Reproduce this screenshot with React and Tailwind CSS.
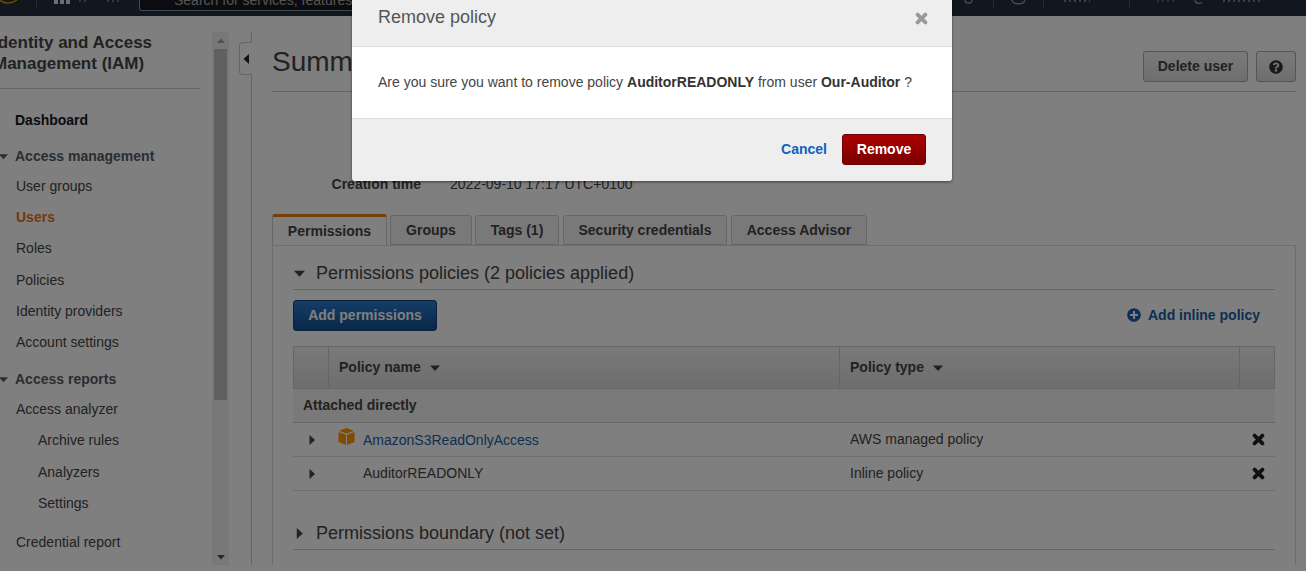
import React from 'react';
import { FaQuestionCircle, FaPlusCircle } from 'react-icons/fa';

const Caret = ({ dir = 'down', className = '' }) => (
  <svg viewBox="0 0 10 10" className={className} fill="currentColor">
    {dir === 'down' && <path d="M0 2.5h10L5 8z" />}
    {dir === 'right' && <path d="M2.5 0v10L8 5z" />}
    {dir === 'left' && <path d="M8 0v10L2.5 5z" />}
  </svg>
);

const CloseIcon = ({ className = '' }) => (
  <svg viewBox="0 0 12 12" className={className} fill="none" stroke="currentColor" strokeWidth="3.5" strokeLinecap="round">
    <path d="M2.4 2.4l7.2 7.2M9.6 2.4l-7.2 7.2" />
  </svg>
);

const CubeIcon = () => (
  <svg viewBox="0 0 17 17" className="w-[17px] h-[17px] text-[#ff9900]" fill="currentColor">
    <path d="M8.5 0L16 2.8 8.5 5.6 1 2.8z" />
    <path d="M0.5 4L8 6.8V17L0.5 14z" />
    <path d="M9 6.8L16.5 4v10L9 17z" />
  </svg>
);

const Sidebar = () => (
  <aside className="w-[229px] shrink-0 flex h-full">
    <div className="w-[212px] shrink-0 overflow-hidden">
      <div className="-ml-[7px] pt-[16px] text-[17px] leading-[21px] font-bold text-[#444]">
        <div className="whitespace-nowrap">Identity and Access</div>
        <div className="whitespace-nowrap">Management (IAM)</div>
      </div>
      <div className="mt-[14px] h-px w-[200px] bg-[#ccc]" />
      <div className="text-[14px] leading-[20px] text-[#444]">
        <div className="mt-[21px] pl-[15px] font-bold text-[#16191f]">Dashboard</div>
        <div className="mt-[16px] flex items-center font-bold text-[#545b64]">
          <Caret className="w-[9px] h-[9px] -ml-[1px] mr-[7px]" />
          Access management
        </div>
        <div className="mt-[10px] pl-[16px]">User groups</div>
        <div className="mt-[11px] pl-[16px] font-bold text-[#ec7211]">Users</div>
        <div className="mt-[11px] pl-[16px]">Roles</div>
        <div className="mt-[12px] pl-[16px]">Policies</div>
        <div className="mt-[11px] pl-[16px]">Identity providers</div>
        <div className="mt-[11px] pl-[16px]">Account settings</div>
        <div className="mt-[17px] flex items-center font-bold text-[#545b64]">
          <Caret className="w-[9px] h-[9px] -ml-[1px] mr-[7px]" />
          Access reports
        </div>
        <div className="mt-[10px] pl-[16px]">Access analyzer</div>
        <div className="mt-[11px] pl-[38px]">Archive rules</div>
        <div className="mt-[12px] pl-[38px]">Analyzers</div>
        <div className="mt-[11px] pl-[38px]">Settings</div>
        <div className="mt-[19px] pl-[16px]">Credential report</div>
      </div>
    </div>
    <div className="w-[17px] mt-[16px] mb-[6px] bg-[#f1f1f1] flex flex-col items-center">
      <div className="h-[17px] flex items-center text-[#a3a3a3]">
        <Caret dir="down" className="w-[8px] h-[8px] rotate-180" />
      </div>
      <div className="w-[13px] h-[351px] bg-[#c1c1c1]" />
      <div className="flex-1" />
      <div className="h-[17px] flex items-center text-[#505050]">
        <Caret dir="down" className="w-[8px] h-[8px]" />
      </div>
    </div>
  </aside>
);

const tabs = [
  { label: 'Groups', cls: 'ml-[3px] w-[82px]' },
  { label: 'Tags (1)', cls: 'ml-[3px] w-[84px]' },
  { label: 'Security credentials', cls: 'ml-[4px] w-[164px]' },
  { label: 'Access Advisor', cls: 'ml-[4px] w-[136px]' },
];

const PolicyRow = ({ name, type, link }) => (
  <div className="flex h-[34px] border-b border-[#ddd] items-center">
    <div className="w-[35px] flex justify-center pl-[2px] text-[#444]">
      <Caret dir="right" className="w-[10px] h-[10px]" />
    </div>
    {/* icon column */}
    <div className="w-[35px] flex justify-center pl-[1px] -mt-[6px]">
      {link && <CubeIcon />}
    </div>
    <div className={`w-[477px] ${link ? 'text-[#1a5ea8] pt-[2px]' : 'text-[#444]'}`}>{name}</div>
    <div className="flex-1 pl-[10px] text-[#444]">{type}</div>
    <CloseIcon className="w-[13px] h-[13px] mr-[10px] text-[#222]" />
  </div>
);

const Main = () => (
  <main className="flex-1 min-w-0 flex h-full">
    <div className="w-[12px] shrink-0 mt-[16px] mb-[6px] ml-[11px] relative border-r border-[#ccc]">
      <div className="absolute -left-[1px] top-[10px] w-[13px] h-[33px] bg-white border border-r-0 border-[#ccc] rounded-l-[4px] flex items-center justify-center text-[#222]">
        <Caret dir="left" className="w-[10px] h-[10px]" />
      </div>
    </div>
    <div className="flex-1 min-w-0 pl-[20px] pr-[10px]">
      <div className="h-[76px] pt-[35px] border-b border-[#ccc] flex justify-between items-start">
        <h1 className="text-[28px] leading-[34px] -mt-[6px] text-[#444]">Summary</h1>
        <div className="flex gap-[8px]">
          <button className="h-[31px] w-[105px] border border-[#aaa] rounded-[3px] bg-gradient-to-b from-[#f4f4f4] to-[#dedede] text-[14px] font-bold text-[#444]">Delete user</button>
          <button className="h-[31px] w-[40px] border border-[#aaa] rounded-[3px] bg-gradient-to-b from-[#f4f4f4] to-[#dedede] flex items-center justify-center text-[#333]">
            <FaQuestionCircle className="w-[14px] h-[14px]" />
          </button>
        </div>
      </div>
      <div className="h-[123px]">
        <div className="flex pt-[82px] text-[14px] leading-[20px] text-[#444]">
          <div className="w-[149px] text-right font-bold">Creation time</div>
          <div className="pl-[29px]">2022-09-10 17:17 UTC+0100</div>
        </div>
      </div>
      <div className="flex h-[31px] text-[14px] font-bold text-[#444] -mt-[1px] relative">
        <div className="w-[115px] h-[31px] bg-white border-x border-[#ccc] border-t-[3px] border-t-[#e7810f] rounded-t-[3px] flex items-center justify-center relative -mb-px">Permissions</div>
        {tabs.map((t) => (
          <div key={t.label} className={`${t.cls} h-[30px] mt-px bg-[#f2f3f3] border border-[#ccc] rounded-t-[3px] flex items-center justify-center whitespace-nowrap`}>{t.label}</div>
        ))}
      </div>
      <div className="border border-[#ddd] px-[20px] h-[320px] border-b-0">
        <div className="h-[44px] pt-[12px] border-b border-[#ccc] flex items-center text-[18px] text-[#444]">
          <Caret className="w-[11px] h-[11px] mr-[11px] ml-[1px]" />
          Permissions policies (2 policies applied)
        </div>
        <div className="flex items-center justify-between h-[50px]">
          <button className="h-[31px] w-[144px] mt-[1px] rounded-[3px] border border-[#15437a] bg-gradient-to-b from-[#2a7bd0] to-[#14508f] text-[14px] font-bold text-white">Add permissions</button>
          <div className="flex items-center gap-[7px] mr-[15px] text-[14px] font-bold text-[#1a5ea8]">
            <FaPlusCircle className="w-[14px] h-[14px]" />
            Add inline policy
          </div>
        </div>
        <div className="text-[14px] mt-[6px]">
          <div className="flex h-[43px] border border-[#ccc] bg-gradient-to-b from-[#f2f2f2] to-[#dcdcdc] font-bold text-[#444]">
            <div className="w-[35px] border-r border-[#ccc]" />
            <div className="w-[511px] border-r border-[#ccc] flex items-center pl-[10px]">
              Policy name
              <Caret className="w-[10px] h-[10px] ml-[9px]" />
            </div>
            <div className="w-[400px] border-r border-[#ccc] flex items-center pl-[10px]">
              Policy type
              <Caret className="w-[10px] h-[10px] ml-[9px]" />
            </div>
          </div>
          <div className="h-[34px] pl-[10px] flex items-center bg-[#f2f2f2] border-b border-[#ccc] font-bold text-[#444]">Attached directly</div>
          <PolicyRow name="AmazonS3ReadOnlyAccess" type="AWS managed policy" link />
          <PolicyRow name="AuditorREADONLY" type="Inline policy" />
        </div>
        <div className="mt-[24px] h-[35px] pt-[2px] border-b border-[#ccc] flex items-center text-[18px] text-[#444]">
          <Caret dir="right" className="w-[11px] h-[11px] mr-[11px] ml-[1px]" />
          Permissions boundary (not set)
        </div>
      </div>
    </div>
  </main>
);

const Dialog = () => (
  <div className="absolute top-0 left-[352px] w-[600px] h-[181px] bg-[#eee] rounded-b-[3px] shadow-[0_1px_3px_rgba(0,0,0,0.5)] flex flex-col">
    <div className="h-[47px] shrink-0 px-[26px] flex items-center justify-between border-b border-[#ddd]">
      <span className="text-[18px] text-[#555] -mt-[12px]">Remove policy</span>
      <CloseIcon className="w-[13px] h-[13px] -mt-[10px] -mr-[2px] text-[#999]" />
    </div>
    <div className="h-[72px] shrink-0 bg-white border-b border-[#ddd] px-[26px] flex items-center text-[14px] text-[#444] whitespace-pre">
      Are you sure you want to remove policy <b className="text-[#333]">AuditorREADONLY</b> from user <b className="text-[#333]">Our-Auditor</b> ?
    </div>
    <div className="flex-1 flex items-center justify-end pr-[26px] pb-[2px] text-[14px] font-bold">
      <span className="text-[#0f62c0] mr-[15px]">Cancel</span>
      <button className="h-[31px] w-[84px] rounded-[3px] border border-[#6f0000] bg-gradient-to-b from-[#ad0000] to-[#7a0000] text-white">Remove</button>
    </div>
  </div>
);

// top bar is scrolled mostly out of view, only the bottoms of its items show
const Header = () => (
  <header className="h-[16px] bg-[#232f3e] flex items-start overflow-hidden text-[14px] text-[#ddd]">
    <svg viewBox="0 0 18 4" className="w-[18px] h-[4px] shrink-0" fill="none" stroke="#ff9900" strokeWidth="1.3">
      <path d="M0 0.5c5 3.5 11 3.5 17-0.5" />
    </svg>
    <div className="ml-[18px] w-px h-[7px] bg-[#545b64] shrink-0" />
    <div className="ml-[17px] flex gap-[2px] shrink-0">
      <div className="w-[4px] h-[4px] bg-[#ddd]" />
      <div className="w-[4px] h-[4px] bg-[#ddd]" />
      <div className="w-[4px] h-[4px] bg-[#ddd]" />
    </div>
    <svg viewBox="0 0 42 3" className="ml-[9px] w-[42px] h-[3px] shrink-0" stroke="#888" strokeWidth="1.5" strokeDasharray="2 3">
      <path d="M0 1h10M28 1h14" />
    </svg>
    <div className="ml-[18px] w-[500px] h-[11px] shrink-0 border border-t-0 border-[#879596] rounded-b-[3px] bg-[#16191f] pl-[34px] text-[#aaa] overflow-hidden whitespace-nowrap">
      <span className="block -mt-[7px] leading-[14px]">Search for services, features, blogs</span>
    </div>
    <svg viewBox="0 0 346 8" className="ml-auto w-[346px] h-[8px] shrink-0" fill="none" stroke="#999" strokeWidth="1.3">
      <path d="M5 0c0 4 7 4 7 0" />
      <path d="M52 0c1 5 12 5 13 0" />
      <path d="M235 0c0 4 6 4 7 2" />
      <path d="M104 1h26M263 1h38" strokeDasharray="2 3" />
      <path d="M197 1h20" stroke="#8a6a35" strokeDasharray="2 3" />
      <path d="M33.5 0v7M83.5 0v7M169.5 0v7" stroke="#545b64" strokeWidth="1" />
    </svg>
  </header>
);

export default function App() {
  return (
    <div className="relative h-[571px] w-[1306px] overflow-hidden bg-white font-['Liberation_Sans',Arial,sans-serif]">
      <Header />
      <div className="flex h-[555px]">
        <Sidebar />
        <Main />
      </div>
      {/* dimmed backdrop */}
      <div className="absolute inset-0 bg-black/50" />
      <Dialog />
    </div>
  );
}
